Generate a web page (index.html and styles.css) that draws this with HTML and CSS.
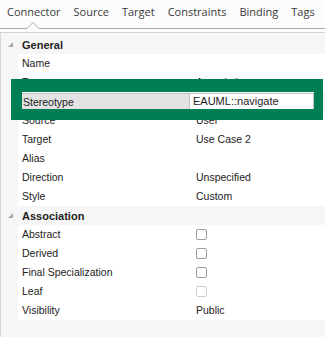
FILE: index.html
```html
<!DOCTYPE html>
<html>
<head>
<meta charset="utf-8">
<link rel="stylesheet" href="styles.css">
</head>
<body>
<div class="page">
  <div class="tabs">
    <span class="tab">Connector</span>
    <span class="tab">Source</span>
    <span class="tab">Target</span>
    <span class="tab">Constraints</span>
    <span class="tab">Binding</span>
    <span class="tab">Tags</span>
  </div>
  <svg class="tabline" width="325" height="7" viewBox="0 0 325 7">
    <polyline points="0,6.5 27,6.5 33,0.5 39,6.5 325,6.5" fill="none" stroke="#a9a9a9" stroke-width="1"/>
  </svg>
  <div class="gapline"></div>
  <div class="grid">
    <div class="row head">
      <span class="exp"><svg width="5" height="5" viewBox="0 0 5 5"><polygon points="5,0 5,5 0,5" fill="#a8a8a8"/></svg></span>
      <span class="hlabel">General</span>
    </div>
    <div class="row"><span class="gut"></span><span class="lbl">Name</span><span class="val"></span></div>
    <div class="row"><span class="gut"></span><span class="lbl">Type</span><span class="val">Association</span></div>
    <div class="row sel"><span class="gut"></span><span class="lbl">Stereotype</span><span class="val">EAUML::navigate</span></div>
    <div class="row"><span class="gut"></span><span class="lbl">Source</span><span class="val">User</span></div>
    <div class="row"><span class="gut"></span><span class="lbl">Target</span><span class="val">Use Case 2</span></div>
    <div class="row"><span class="gut"></span><span class="lbl">Alias</span><span class="val"></span></div>
    <div class="row"><span class="gut"></span><span class="lbl">Direction</span><span class="val">Unspecified</span></div>
    <div class="row"><span class="gut"></span><span class="lbl">Style</span><span class="val">Custom</span></div>
    <div class="row head">
      <span class="exp"><svg width="5" height="5" viewBox="0 0 5 5"><polygon points="5,0 5,5 0,5" fill="#a8a8a8"/></svg></span>
      <span class="hlabel">Association</span>
    </div>
    <div class="row"><span class="gut"></span><span class="lbl">Abstract</span><span class="val"><span class="cb"></span></span></div>
    <div class="row"><span class="gut"></span><span class="lbl">Derived</span><span class="val"><span class="cb"></span></span></div>
    <div class="row"><span class="gut"></span><span class="lbl">Final Specialization</span><span class="val"><span class="cb"></span></span></div>
    <div class="row"><span class="gut"></span><span class="lbl">Leaf</span><span class="val"><span class="cb dis"></span></span></div>
    <div class="row"><span class="gut"></span><span class="lbl">Visibility</span><span class="val">Public</span></div>
  </div>
  <div class="highlight"></div>
</div>
</body>
</html>
```

FILE: styles.css
```css
* { box-sizing: border-box; }
html, body { margin: 0; padding: 0; }
body {
  width: 325px;
  height: 337px;
  overflow: hidden;
  background: #f6f6f6;
}
.page {
  position: relative;
  width: 325px;
  height: 337px;
  display: flex;
  flex-direction: column;
}
.tabs {
  height: 22px;
  display: flex;
  gap: 13px;
  padding-left: 7px;
  padding-top: 3px;
  background: #fcfcfc;
  font-family: "Open Sans", sans-serif;
  font-size: 11px;
  line-height: 17px;
  color: #3a3a3a;
  white-space: nowrap;
}
.tabline {
  display: block;
  background: #fcfcfc;
}
.gapline {
  height: 4px;
  background: #fcfcfc;
  border-bottom: 1px solid #d3d3d3;
}
.grid {
  flex: 1;
  padding-top: 2px;
  border-left: 1px solid #d6d6d6;
  font-family: "Liberation Sans", Arial, sans-serif;
  font-size: 10.5px;
  color: #222;
}
.row {
  height: 19px;
  display: grid;
  grid-template-columns: 17px 172px 1fr;
  align-items: center;
}
.row .lbl, .row .val {
  height: 19px;
  line-height: 19px;
  background: #fff;
  white-space: nowrap;
  overflow: hidden;
}
.row .lbl { padding-left: 4px; }
.row .val { padding-left: 6px; display: flex; align-items: center; }
.head {
  grid-template-columns: 17px 1fr;
}
.exp {
  display: flex;
  justify-content: center;
  padding-left: 1px;
  align-items: center;
}
.exp svg { display: block; }
.hlabel {
  padding-left: 4px;
  font-weight: bold;
  font-size: 11px;
  color: #1e1e1e;
}
.sel .lbl {
  background: #e3e3e3;
  border: 1px solid #c4c4c4;
  line-height: 16px;
  padding-left: 4px;
  height: 18px;
}
.sel .val {
  border: 1px solid #c4c4c4;
  border-left: none;
  height: 18px;
  padding-left: 3px;
  margin-right: 11px;
  font-size: 11px;
}
.cb {
  display: block;
  width: 11px;
  height: 11px;
  border: 1px solid #9c9c9c;
  border-radius: 2px;
  background: #fff;
}
.cb.dis { border-color: #cfcfcf; }
.highlight {
  position: absolute;
  left: 11px;
  top: 79px;
  width: 312px;
  height: 41px;
  border-style: solid;
  border-color: #007f56;
  border-width: 13px 9px 11px 11px;
}
```
